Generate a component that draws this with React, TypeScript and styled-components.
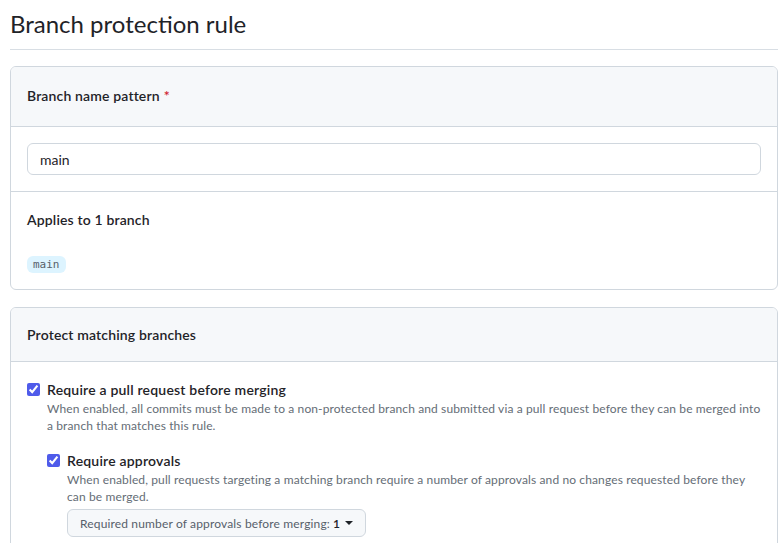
import styled, { createGlobalStyle } from 'styled-components';

const GlobalStyle = createGlobalStyle`
  body {
    margin: 0;
    background: #ffffff;
    color: #1f2328;
    font-family: Lato, 'Noto Sans', 'Liberation Sans', sans-serif;
  }
`;

const Page = styled.div`
  padding: 0 6px 0 10px;
`;

const Title = styled.h1`
  margin: 0;
  padding: 6px 0 7px;
  font-size: 24px;
  line-height: 36px;
  font-weight: 400;
  border-bottom: 1px solid #d8dee4;
`;

const Box = styled.section`
  margin-top: 16px;
  border: 1px solid #d0d7de;
  border-radius: 6px;
  overflow: hidden;
  & + & {
    margin-top: 17px;
  }
`;

const BoxHeader = styled.div<{ $tall?: boolean }>`
  background: #f6f8fa;
  border-bottom: 1px solid #d0d7de;
  padding: ${(p) => (p.$tall ? '19px 16px 20px' : '16px')};
  font-size: 14px;
  line-height: ${(p) => (p.$tall ? '20px' : '21px')};
  font-weight: 600;
  letter-spacing: 0.15px;
`;

const Required = styled.span`
  color: #cf222e;
  margin-left: 4px;
`;

const BoxRow = styled.div`
  padding: 16px;
  & + & {
    border-top: 1px solid #d0d7de;
  }
`;

const TextInput = styled.input`
  box-sizing: border-box;
  display: block;
  width: 100%;
  height: 32px;
  padding: 0 12px;
  border: 1px solid #d0d7de;
  border-radius: 6px;
  font-family: inherit;
  font-size: 14px;
  color: #1f2328;
  background: #ffffff;
  outline: none;
`;

const SubHeading = styled.div`
  font-size: 14px;
  line-height: 21px;
  font-weight: 600;
  letter-spacing: 0.15px;
  margin: 1px 0 26px;
`;

const BranchName = styled.div`
  width: fit-content;
  padding: 0 6px;
  height: 17px;
  line-height: 17px;
  border-radius: 6px;
  background: #ddf4ff;
  color: #57606a;
  font-family: 'DejaVu Sans Mono', 'Liberation Mono', monospace;
  font-size: 11px;
`;

const Option = styled.div<{ $nested?: boolean }>`
  display: grid;
  grid-template-columns: 13px 1fr;
  column-gap: 7px;
  margin-top: ${(p) => (p.$nested ? '16px' : '1px')};
`;

const Check = styled.input`
  width: 13px;
  height: 13px;
  margin: 4px 0 0;
  accent-color: #4f5bea;
`;

const OptionLabel = styled.label`
  font-size: 14px;
  line-height: 21px;
  font-weight: 600;
  letter-spacing: 0.2px;
`;

const Note = styled.p`
  grid-column: 2;
  margin: 0;
  font-size: 12px;
  line-height: 17px;
  letter-spacing: 0.12px;
  color: #656d76;
`;

const Nested = styled.div`
  grid-column: 2;
`;

const SelectButton = styled.button`
  grid-column: 2;
  justify-self: start;
  display: flex;
  align-items: center;
  gap: 3px;
  margin-top: 4px;
  height: 28px;
  padding: 0 12px;
  border: 1px solid #d0d7de;
  border-radius: 6px;
  background: #f6f8fa;
  font-family: inherit;
  font-size: 12px;
  letter-spacing: 0.15px;
  color: #57606a;
`;

const Count = styled.span`
  color: #1f2328;
  font-weight: 600;
`;

const Caret = styled.span`
  display: inline-block;
  width: 0;
  height: 0;
  margin-left: 2px;
  border-left: 4px solid transparent;
  border-right: 4px solid transparent;
  border-top: 4px solid #1f2328;
`;

export default function App() {
  return (
    <Page>
      <GlobalStyle />
      <Title>Branch protection rule</Title>

      <Box>
        <BoxHeader $tall>
          Branch name pattern<Required>*</Required>
        </BoxHeader>
        <BoxRow>
          <TextInput defaultValue="main" />
        </BoxRow>
        <BoxRow>
          <SubHeading>Applies to 1 branch</SubHeading>
          <BranchName>main</BranchName>
        </BoxRow>
      </Box>

      <Box>
        <BoxHeader>Protect matching branches</BoxHeader>
        <BoxRow>
          <Option>
            <Check type="checkbox" defaultChecked />
            <OptionLabel>Require a pull request before merging</OptionLabel>
            <Note>
              When enabled, all commits must be made to a non-protected branch and submitted via a pull
              request before they can be merged into a branch that matches this rule.
            </Note>
            <Nested>
              <Option $nested>
                <Check type="checkbox" defaultChecked />
                <OptionLabel>Require approvals</OptionLabel>
                <Note>
                  When enabled, pull requests targeting a matching branch require a number of approvals and
                  no changes requested before they can be merged.
                </Note>
                <SelectButton type="button">
                  Required number of approvals before merging: <Count>1</Count>
                  <Caret />
                </SelectButton>
              </Option>
            </Nested>
          </Option>
        </BoxRow>
      </Box>
    </Page>
  );
}
